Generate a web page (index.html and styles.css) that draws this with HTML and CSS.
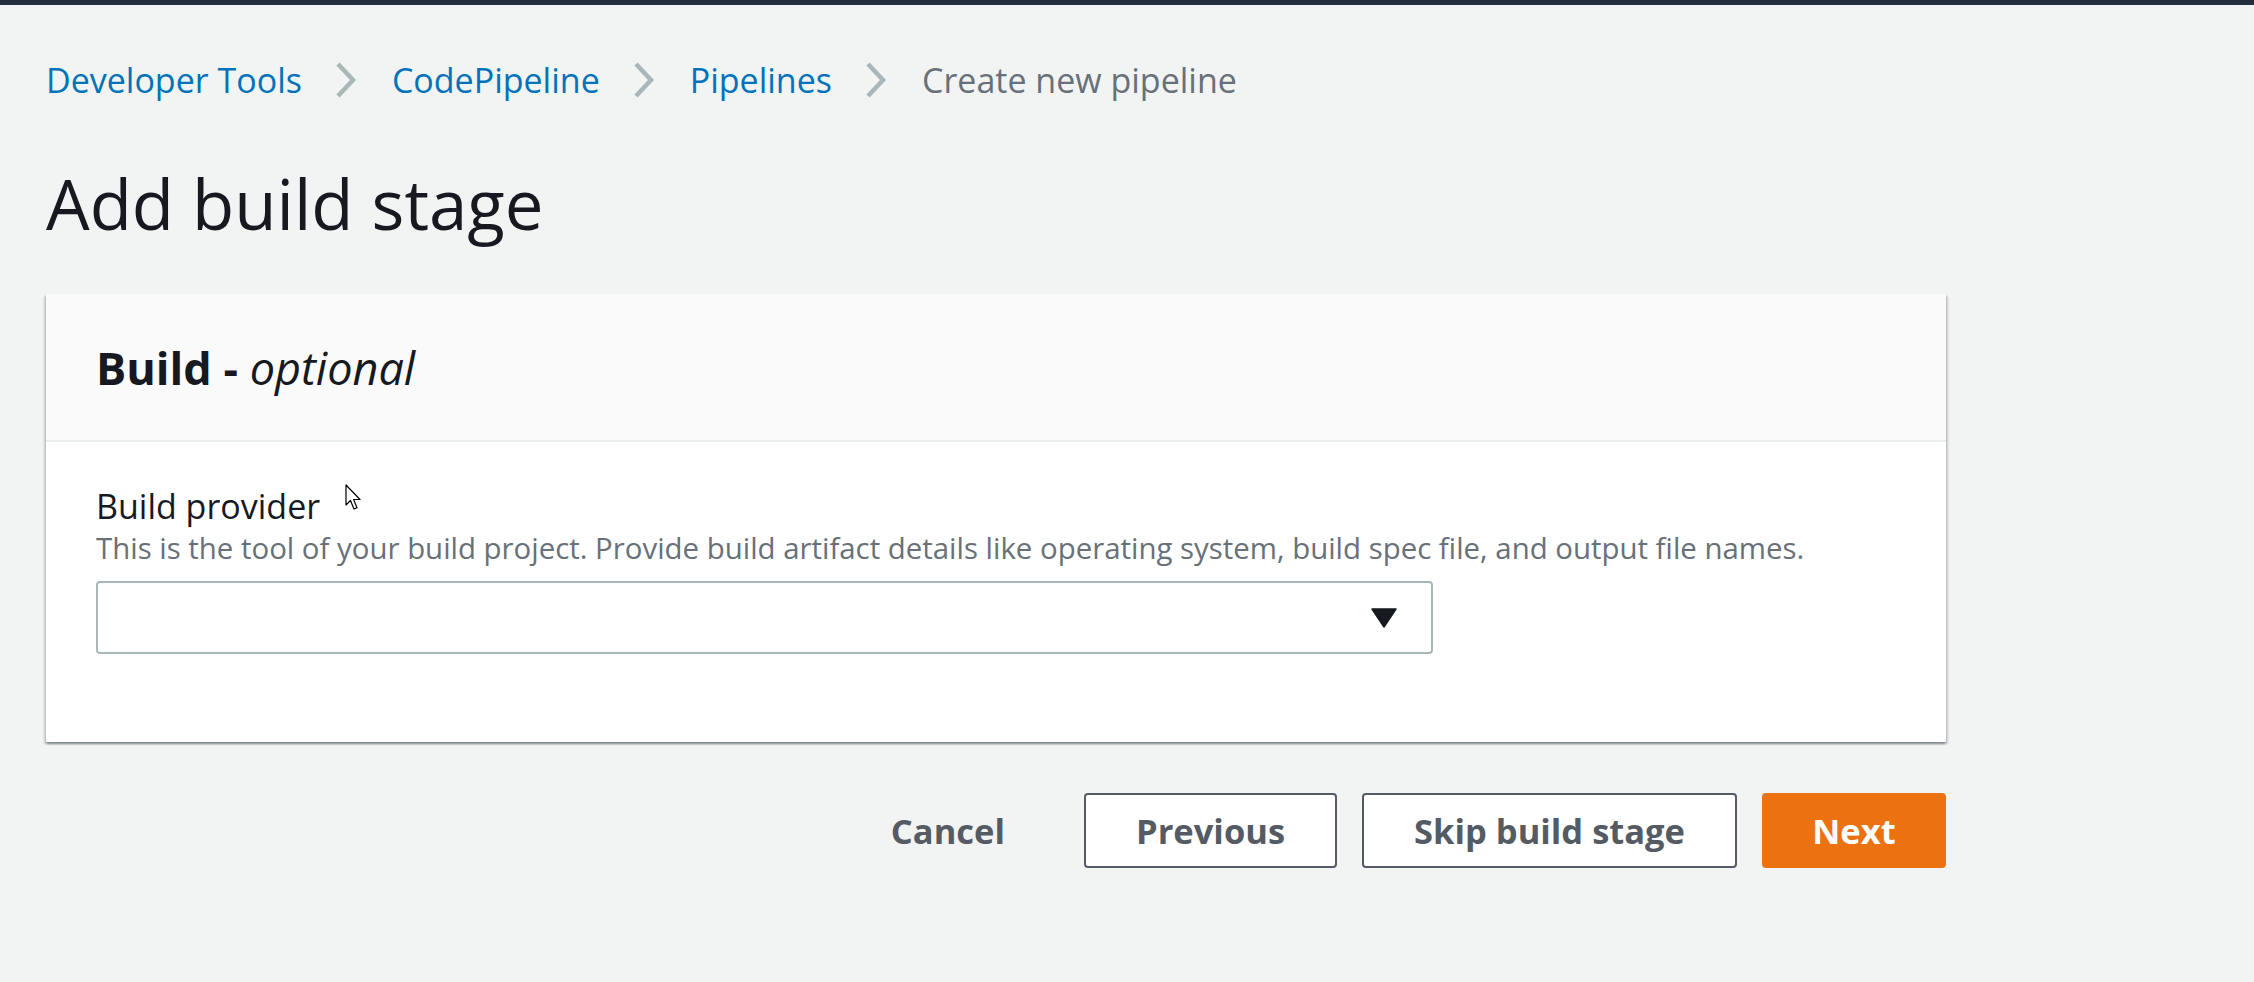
FILE: index.html
```html
<!DOCTYPE html>
<html lang="en">
<head>
<meta charset="utf-8">
<title>Add build stage</title>
<link rel="stylesheet" href="styles.css">
</head>
<body>
<div class="topbar"></div>
<main class="page">
  <nav class="breadcrumbs">
    <a class="crumb link" href="#">Developer Tools</a>
    <svg class="chev" width="22" height="36" viewBox="0 0 22 36"><path d="M3 2 L18 18 L3 34" fill="none" stroke="#aab7b8" stroke-width="4.5"/></svg>
    <a class="crumb link" href="#">CodePipeline</a>
    <svg class="chev" width="22" height="36" viewBox="0 0 22 36"><path d="M3 2 L18 18 L3 34" fill="none" stroke="#aab7b8" stroke-width="4.5"/></svg>
    <a class="crumb link" href="#">Pipelines</a>
    <svg class="chev" width="22" height="36" viewBox="0 0 22 36"><path d="M3 2 L18 18 L3 34" fill="none" stroke="#aab7b8" stroke-width="4.5"/></svg>
    <span class="crumb current">Create new pipeline</span>
  </nav>
  <h1 class="title">Add build stage</h1>
  <section class="card">
    <header class="card-head">
      <h2 class="card-title">Build - <em>optional</em></h2>
    </header>
    <div class="card-body">
      <div class="field">
        <label class="label">Build provider</label>
        <p class="desc">This is the tool of your build project. Provide build artifact details like operating system, build spec file, and output file names.</p>
        <div class="select">
          <svg class="caret" width="26" height="20" viewBox="0 0 26 20"><path d="M1 1 L25 1 L13 19 Z" fill="#16191f" stroke="#16191f" stroke-width="1.5" stroke-linejoin="round"/></svg>
        </div>
      </div>
    </div>
  </section>
  <div class="actions">
    <button class="btn btn-link">Cancel</button>
    <button class="btn btn-normal">Previous</button>
    <button class="btn btn-normal">Skip build stage</button>
    <button class="btn btn-primary">Next</button>
  </div>
</main>
<svg class="cursor" width="18" height="28" viewBox="0 0 18 28"><path d="M1 1 L1 21 L5.5 16.5 L9 25 L12 23.8 L8.6 15.5 L15 15.5 Z" fill="#fff" stroke="#000" stroke-width="1.2" stroke-linejoin="round"/></svg>
</body>
</html>
```

FILE: styles.css
```css
html, body {
  margin: 0;
  padding: 0;
  background: #f2f3f3;
  font-family: "Open Sans", "Noto Sans", sans-serif;
  color: #16191f;
}
.topbar {
  height: 5px;
  background: #232f3e;
}
.page {
  width: 1900px;
  padding-left: 46px;
  position: relative;
}
.breadcrumbs {
  display: flex;
  align-items: center;
  height: 40px;
  margin-top: 55px;
}
.crumb {
  font-size: 34px;
  line-height: 40px;
  text-decoration: none;
}
.crumb.link { color: #0073bb; }
.crumb.current { color: #687078; }
.chev {
  margin: 0 35px 0 33px;
  flex: none;
}
.title {
  margin: 63px 0 0 0;
  font-size: 69px;
  line-height: 80px;
  font-weight: 400;
  color: #16191f;
}
.card {
  margin-top: 51px;
  background: #fff;
  box-shadow: 0 2px 2px 0 rgba(0, 28, 36, 0.3), 2px 2px 2px 0 rgba(0, 28, 36, 0.15), -2px 2px 2px 0 rgba(0, 28, 36, 0.15);
}
.card-head {
  height: 146px;
  background: #fafafa;
  border-bottom: 2px solid #eaeded;
  display: flex;
  align-items: center;
  padding-left: 50px;
}
.card-title {
  margin: 0;
  font-size: 45px;
  font-weight: 700;
}
.card-title em {
  font-weight: 400;
  font-style: italic;
}
.card-body {
  padding: 44px 50px 88px 50px;
}
.label {
  display: block;
  font-size: 34px;
  line-height: 40px;
  color: #16191f;
}
.desc {
  margin: 2px 0 0 0;
  font-size: 29.4px;
  line-height: 40px;
  color: #687078;
}
.select {
  margin-top: 13px;
  width: 1333px;
  height: 69px;
  border: 2px solid #aab7b8;
  border-radius: 4px;
  background: #fff;
  display: flex;
  align-items: center;
  justify-content: flex-end;
}
.caret {
  margin-right: 34px;
}
.actions {
  display: flex;
  justify-content: flex-end;
  align-items: center;
  gap: 25px;
  margin-top: 51px;
}
.btn {
  font-family: inherit;
  font-size: 34.5px;
  font-weight: 700;
  height: 75px;
  border-radius: 4px;
  cursor: pointer;
  padding: 0 50px;
}
.btn-link {
  background: transparent;
  border: none;
  color: #545b64;
  padding: 0 32px;
  margin-right: 22px;
}
.btn-normal {
  background: #fff;
  border: 2px solid #545b64;
  color: #545b64;
}
.btn-primary {
  background: #ec7211;
  border: 2px solid #ec7211;
  color: #fff;
  padding: 0;
  width: 184px;
}
.cursor {
  position: absolute;
  left: 345px;
  top: 484px;
}
```
